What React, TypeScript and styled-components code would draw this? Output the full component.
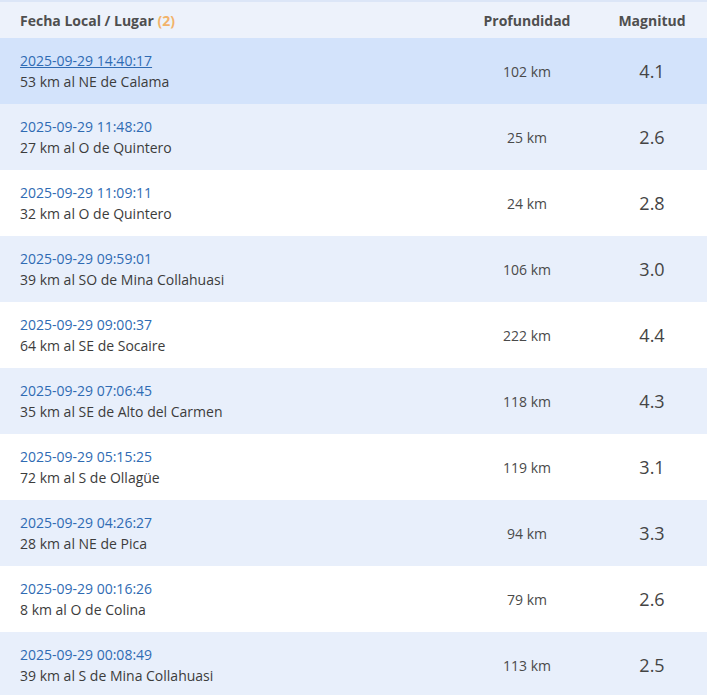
import * as React from "react";
import styled, { createGlobalStyle } from "styled-components";

const GlobalStyle = createGlobalStyle`
  html, body {
    margin: 0;
    padding: 0;
    background: #ffffff;
  }
  body {
    font-family: "Open Sans", "Noto Sans", sans-serif;
  }
`;

const Table = styled.div`
  width: 707px;
  border-top: 2px solid #dce6f7;
`;

const Row = styled.div<{ $tone: "header" | "active" | "alt" | "plain" }>`
  display: grid;
  grid-template-columns: 1fr 140px 110px;
  align-items: center;
  height: ${(p) => (p.$tone === "header" ? "36px" : "66px")};
  background: ${(p) =>
    p.$tone === "header"
      ? "#edf2fb"
      : p.$tone === "active"
      ? "#d3e3fb"
      : p.$tone === "alt"
      ? "#e8effb"
      : "#ffffff"};
`;

const HeadCell = styled.div<{ $center?: boolean }>`
  font-size: 14px;
  font-weight: 700;
  color: #4f4f4f;
  padding-left: ${(p) => (p.$center ? "0" : "20px")};
  text-align: ${(p) => (p.$center ? "center" : "left")};
`;

const Count = styled.span`
  color: #f2b36a;
  font-weight: 700;
`;

const PlaceCell = styled.div`
  padding-left: 20px;
  display: flex;
  flex-direction: column;
  gap: 1px;
`;

const DateLink = styled.a<{ $active?: boolean }>`
  font-size: 14px;
  line-height: 20px;
  color: #2f6bb3;
  text-decoration: ${(p) => (p.$active ? "underline" : "none")};
  cursor: pointer;
`;

const Place = styled.div`
  font-size: 14px;
  line-height: 20px;
  color: #3c3c3c;
`;

const Depth = styled.div`
  text-align: center;
  font-size: 14px;
  color: #4a4a4a;
`;

const Magnitude = styled.div`
  text-align: center;
  font-size: 18px;
  color: #444444;
`;

type Quake = { date: string; place: string; depth: number; mag: string };

const quakes: Quake[] = [
  { date: "2025-09-29 14:40:17", place: "53 km al NE de Calama", depth: 102, mag: "4.1" },
  { date: "2025-09-29 11:48:20", place: "27 km al O de Quintero", depth: 25, mag: "2.6" },
  { date: "2025-09-29 11:09:11", place: "32 km al O de Quintero", depth: 24, mag: "2.8" },
  { date: "2025-09-29 09:59:01", place: "39 km al SO de Mina Collahuasi", depth: 106, mag: "3.0" },
  { date: "2025-09-29 09:00:37", place: "64 km al SE de Socaire", depth: 222, mag: "4.4" },
  { date: "2025-09-29 07:06:45", place: "35 km al SE de Alto del Carmen", depth: 118, mag: "4.3" },
  { date: "2025-09-29 05:15:25", place: "72 km al S de Ollagüe", depth: 119, mag: "3.1" },
  { date: "2025-09-29 04:26:27", place: "28 km al NE de Pica", depth: 94, mag: "3.3" },
  { date: "2025-09-29 00:16:26", place: "8 km al O de Colina", depth: 79, mag: "2.6" },
  { date: "2025-09-29 00:08:49", place: "39 km al S de Mina Collahuasi", depth: 113, mag: "2.5" },
];

export default function App() {
  return (
    <>
      <GlobalStyle />
      <Table>
        <Row $tone="header">
          <HeadCell>
            Fecha Local / Lugar <Count>(2)</Count>
          </HeadCell>
          <HeadCell $center>Profundidad</HeadCell>
          <HeadCell $center>Magnitud</HeadCell>
        </Row>
        {quakes.map((q, i) => {
          const tone = i === 0 ? "active" : i % 2 === 1 ? "alt" : "plain";
          return (
            <Row key={q.date} $tone={tone}>
              <PlaceCell>
                <DateLink $active={i === 0}>{q.date}</DateLink>
                <Place>{q.place}</Place>
              </PlaceCell>
              <Depth>{q.depth} km</Depth>
              <Magnitude>{q.mag}</Magnitude>
            </Row>
          );
        })}
      </Table>
    </>
  );
}
